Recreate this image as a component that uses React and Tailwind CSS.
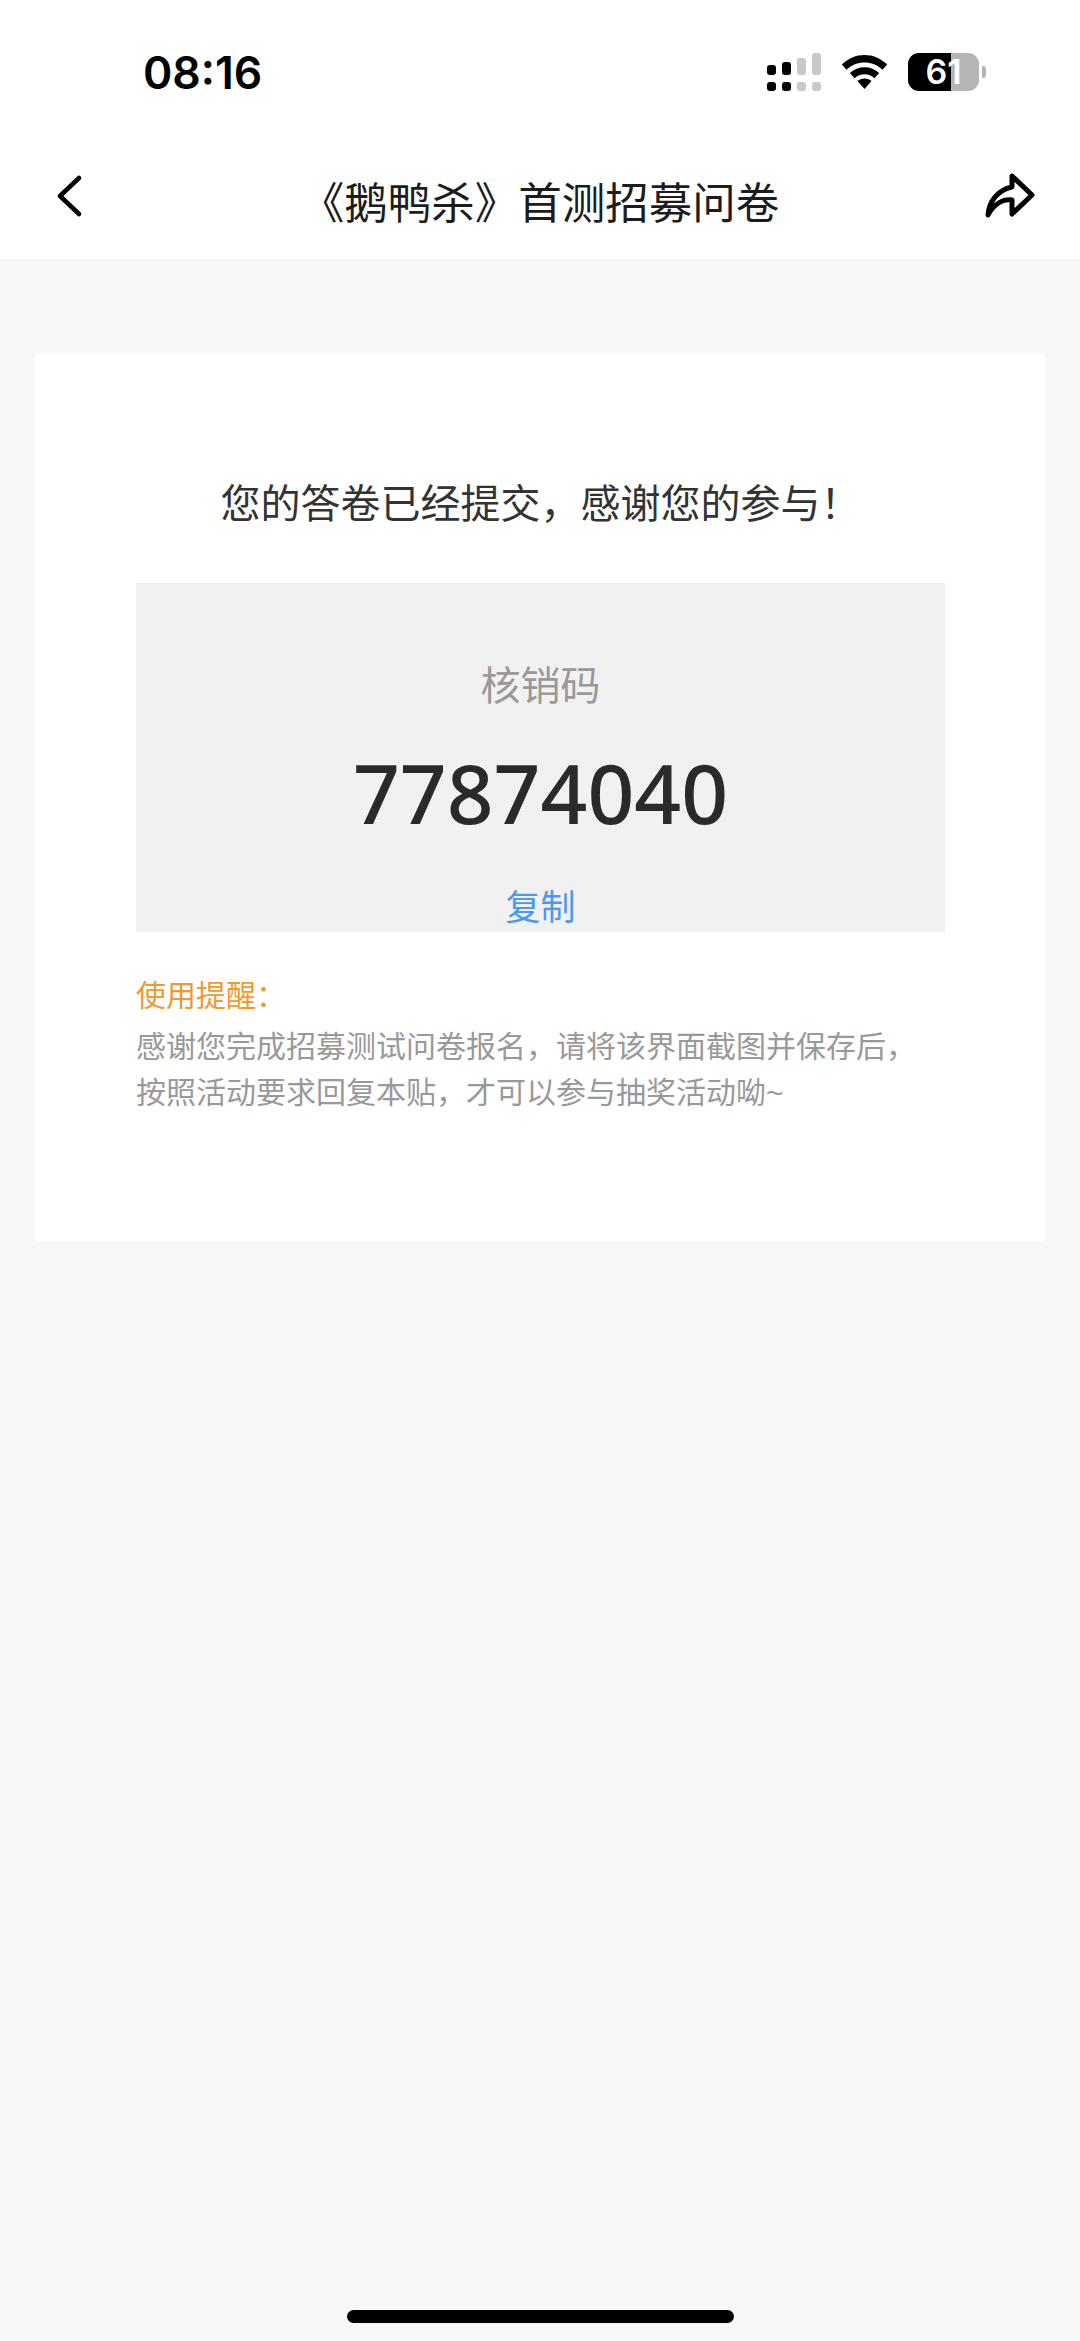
const cjk = { fontFamily: '"Liberation Sans", "Noto Sans CJK SC", sans-serif' };
const inter = { fontFamily: 'Inter, "Liberation Sans", sans-serif' };
const digits = { fontFamily: '"Noto Sans", "Liberation Sans", sans-serif' };

const StatusIcons = () => (
  <div className="flex items-start">
    {/* dual sim signal */}
    <svg width="56" height="38" viewBox="0 0 56 38">
      <rect x="0" y="12" width="9" height="10" rx="3" fill="#000" />
      <rect x="15" y="9" width="9" height="13" rx="3" fill="#000" />
      <rect x="30" y="5" width="9" height="17" rx="3" fill="#c8c8c8" />
      <rect x="45" y="0" width="9" height="22" rx="3" fill="#c8c8c8" />
      <rect x="0" y="29" width="9" height="9" rx="3" fill="#000" />
      <rect x="15" y="29" width="9" height="9" rx="3" fill="#000" />
      <rect x="30" y="29" width="9" height="9" rx="3" fill="#c8c8c8" />
      <rect x="45" y="29" width="9" height="9" rx="3" fill="#c8c8c8" />
    </svg>
    <svg className="ml-[18px] mt-[2px]" width="47" height="34" viewBox="0 0 48 36">
      <path d="M24 0C15 0 7 3.500 0 10L5 15.500C10.500 10.500 17 8 24 8C31 8 37.500 10.500 43 15.500L48 10C41 3.500 33 0 24 0Z" fill="#000" />
      <path d="M24 13C18 13 13 15 8.500 19L13.500 24.500C16.500 22 20 20.500 24 20.500C28 20.500 31.500 22 34.500 24.500L39.500 19C35 15 30 13 24 13Z" fill="#000" />
      <path d="M24 25C21 25 18.500 26 16.500 27.500L24 36L31.500 27.500C29.500 26 27 25 24 25Z" fill="#000" />
    </svg>
    <div className="ml-[20px] flex items-center gap-[3px]">
      <div className="w-[71px] h-[38px] rounded-[11px] bg-[linear-gradient(90deg,#000_43px,#b5b5b5_43px)] flex items-center justify-center">
        <span className="text-white text-[34px] font-semibold leading-none" style={inter}>61</span>
      </div>
      <div className="w-[4px] h-[12px] rounded-r-[3px] bg-[#b5b5b5]" />
    </div>
  </div>
);

export default function App() {
  return (
    <div className="min-h-screen flex flex-col bg-[#f7f7f7]" style={cjk}>
      <div className="bg-white">
        {/* status bar */}
        <div className="h-[143px] flex items-start justify-between pl-[143px] pr-[94px] pt-[49px]">
          <span className="text-[44.500px] leading-[48px] font-semibold text-black" style={inter}>08:16</span>
          <div className="pt-[4px]"><StatusIcons /></div>
        </div>
        {/* nav */}
        <div className="h-[116px] flex items-start justify-between pl-[56px] pr-[44px]">
          <svg className="mt-[32px]" width="26" height="42" viewBox="0 0 26 42" fill="none">
            <path d="M23 3L4 21L23 39" stroke="#000" strokeWidth="4.500" strokeLinecap="round" strokeLinejoin="round" />
          </svg>
          <span className="ml-[16px] text-[43.500px] leading-[60px] mt-[31px] text-[#1c1c1c]">《鹅鸭杀》首测招募问卷</span>
          <svg className="mt-[27px]" width="54" height="50" viewBox="0 0 54 50" fill="none">
            <path d="M6 45C7 31 16 20 30 17V6L50 25L30 44V30C21 29 12 34 6 45Z" stroke="#000" strokeWidth="5" strokeLinejoin="round" strokeLinecap="round" />
          </svg>
        </div>
      </div>

      {/* result card */}
      <div className="mx-[35px] mt-[95px] h-[887px] bg-white pl-[101px] pr-[100px] pt-[120px]">
        <h1 className="text-[40px] leading-[60px] text-[#333] text-center">您的答卷已经提交，感谢您的参与！</h1>
        <div className="mt-[49px] h-[349px] bg-[#f1f1f1] flex flex-col items-center pt-[78px]">
          <div className="text-[40px] leading-[50px] text-[#999]">核销码</div>
          <div className="mt-[36px] text-[82px] leading-[90px] font-medium text-[#2a2a2a]" style={digits}>77874040</div>
          <div className="mt-[46px] text-[35px] leading-[50px] text-[#4a98f0]">复制</div>
        </div>
        <div className="mt-[41px] text-[30px] leading-[46px] text-[#f0992f]">使用提醒：</div>
        <p className="mt-[5px] text-[30px] leading-[46px] text-[#999]">
          感谢您完成招募测试问卷报名，请将该界面截图并保存后，
          <br />
          按照活动要求回复本贴，才可以参与抽奖活动呦~
        </p>
      </div>

      {/* home indicator */}
      <div className="mt-auto pb-[18px] flex justify-center">
        <div className="w-[387px] h-[13px] rounded-full bg-black" />
      </div>
    </div>
  );
}
